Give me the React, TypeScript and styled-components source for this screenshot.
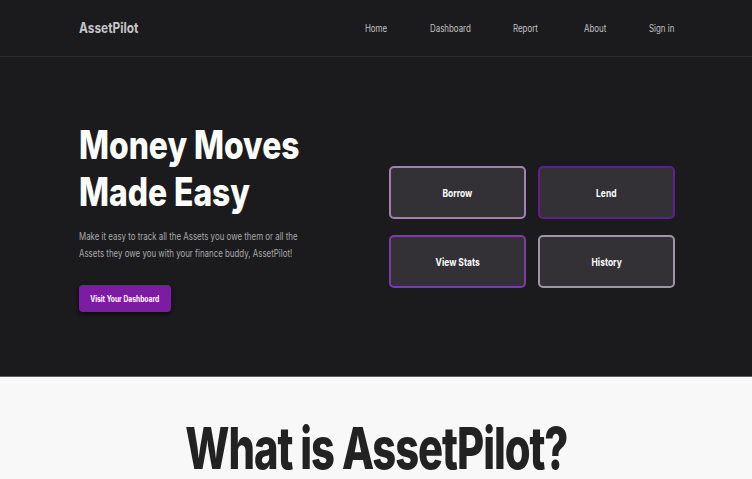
import React from "react";
import styled, { createGlobalStyle, css } from "styled-components";

const Global = createGlobalStyle`
  html, body { margin: 0; padding: 0; background: #1b1b1d; }
  body { font-family: Inter, "Liberation Sans", sans-serif; }
  * { box-sizing: border-box; }
`;

/* the reference typeface is narrower than Inter: squeeze glyphs horizontally */
const squeeze = (s: number, origin = "left") => css`
  display: inline-block;
  transform: scaleX(${s});
  transform-origin: ${origin} center;
  white-space: nowrap;
`;

const Page = styled.div`
  width: 752px;
  min-height: 479px;
  overflow: hidden;
`;

const Nav = styled.header`
  height: 57px;
  display: flex;
  align-items: center;
  justify-content: space-between;
  padding: 0 77px 1px 79px;
  border-bottom: 1px solid #2c2c2e;
`;

const Logo = styled.div`
  font-size: 14.5px;
  font-weight: 700;
  color: #c6c6c8;
  ${squeeze(0.82)}
`;

const Links = styled.nav`
  display: grid;
  grid-template-columns: 65px 83px 71px 65px 26px;
  align-items: center;
`;

const Link = styled.a`
  font-size: 10px;
  color: #c2c2c4;
  text-decoration: none;
  ${squeeze(0.79)}
`;

const Hero = styled.section`
  height: 320px;
  display: flex;
  align-items: flex-start;
  justify-content: space-between;
  padding: 64px 77px 0 79px;
  border-bottom: 1px solid #5f5f61;
`;

const Left = styled.div`
  display: flex;
  flex-direction: column;
  align-items: flex-start;
`;

const Title = styled.h1`
  margin: 0;
  font-size: 39px;
  line-height: 47px;
  font-weight: 800;
  color: #ffffff;
  ${squeeze(0.815)}
`;

const Blurb = styled.p`
  margin: 12.5px 0 0;
  font-size: 10px;
  line-height: 17px;
  color: #a9a9ab;
  ${squeeze(0.79)}
`;

const Cta = styled.button`
  margin-top: 23.5px;
  width: 92px;
  height: 27px;
  padding: 0;
  border: none;
  border-radius: 4px;
  background: #7b1ca3;
  color: #ffffff;
  font-family: inherit;
  font-size: 8.5px;
  font-weight: 700;
  box-shadow: 0 2px 4px rgba(0, 0, 0, 0.65);
  display: flex;
  align-items: center;
  justify-content: center;
`;

const CtaLabel = styled.span`
  ${squeeze(0.79, "center")}
`;

const Grid = styled.div`
  margin-top: 45px;
  display: grid;
  grid-template-columns: 137px 137px;
  grid-auto-rows: 53px;
  column-gap: 12px;
  row-gap: 16px;
`;

const Card = styled.button<{ $border: string }>`
  padding: 0;
  background: #333136;
  border: 2px solid ${(p) => p.$border};
  border-radius: 5px;
  color: #ffffff;
  font-family: inherit;
  font-size: 11px;
  font-weight: 700;
  display: flex;
  align-items: center;
  justify-content: center;
`;

const CardLabel = styled.span`
  ${squeeze(0.77, "center")}
`;

const About = styled.section`
  background: #f8f8f8;
  height: 102px;
  display: flex;
  justify-content: center;
  padding-top: 42px;
`;

const AboutTitle = styled.h2`
  margin: 0;
  font-size: 58px;
  line-height: 58px;
  font-weight: 800;
  letter-spacing: -1.5px;
  color: #222222;
  ${squeeze(0.72, "center")}
`;

const links = ["Home", "Dashboard", "Report", "About", "Sign in"];

const cards: [string, string][] = [
  ["Borrow", "#a480b0"],
  ["Lend", "#5e2090"],
  ["View Stats", "#7c3ba2"],
  ["History", "#9e96a2"],
];

export default function App() {
  return (
    <Page>
      <Global />
      <Nav>
        <Logo>AssetPilot</Logo>
        <Links>
          {links.map((t) => (
            <Link key={t} href="#">
              {t}
            </Link>
          ))}
        </Links>
      </Nav>
      <Hero>
        <Left>
          <Title>
            Money Moves
            <br />
            Made Easy
          </Title>
          <Blurb>
            Make it easy to track all the Assets you owe them or all the
            <br />
            Assets they owe you with your finance buddy, AssetPilot!
          </Blurb>
          <Cta>
            <CtaLabel>Visit Your Dashboard</CtaLabel>
          </Cta>
        </Left>
        <Grid>
          {cards.map(([t, c]) => (
            <Card key={t} $border={c}>
              <CardLabel>{t}</CardLabel>
            </Card>
          ))}
        </Grid>
      </Hero>
      <About>
        <AboutTitle>What is AssetPilot?</AboutTitle>
      </About>
    </Page>
  );
}
